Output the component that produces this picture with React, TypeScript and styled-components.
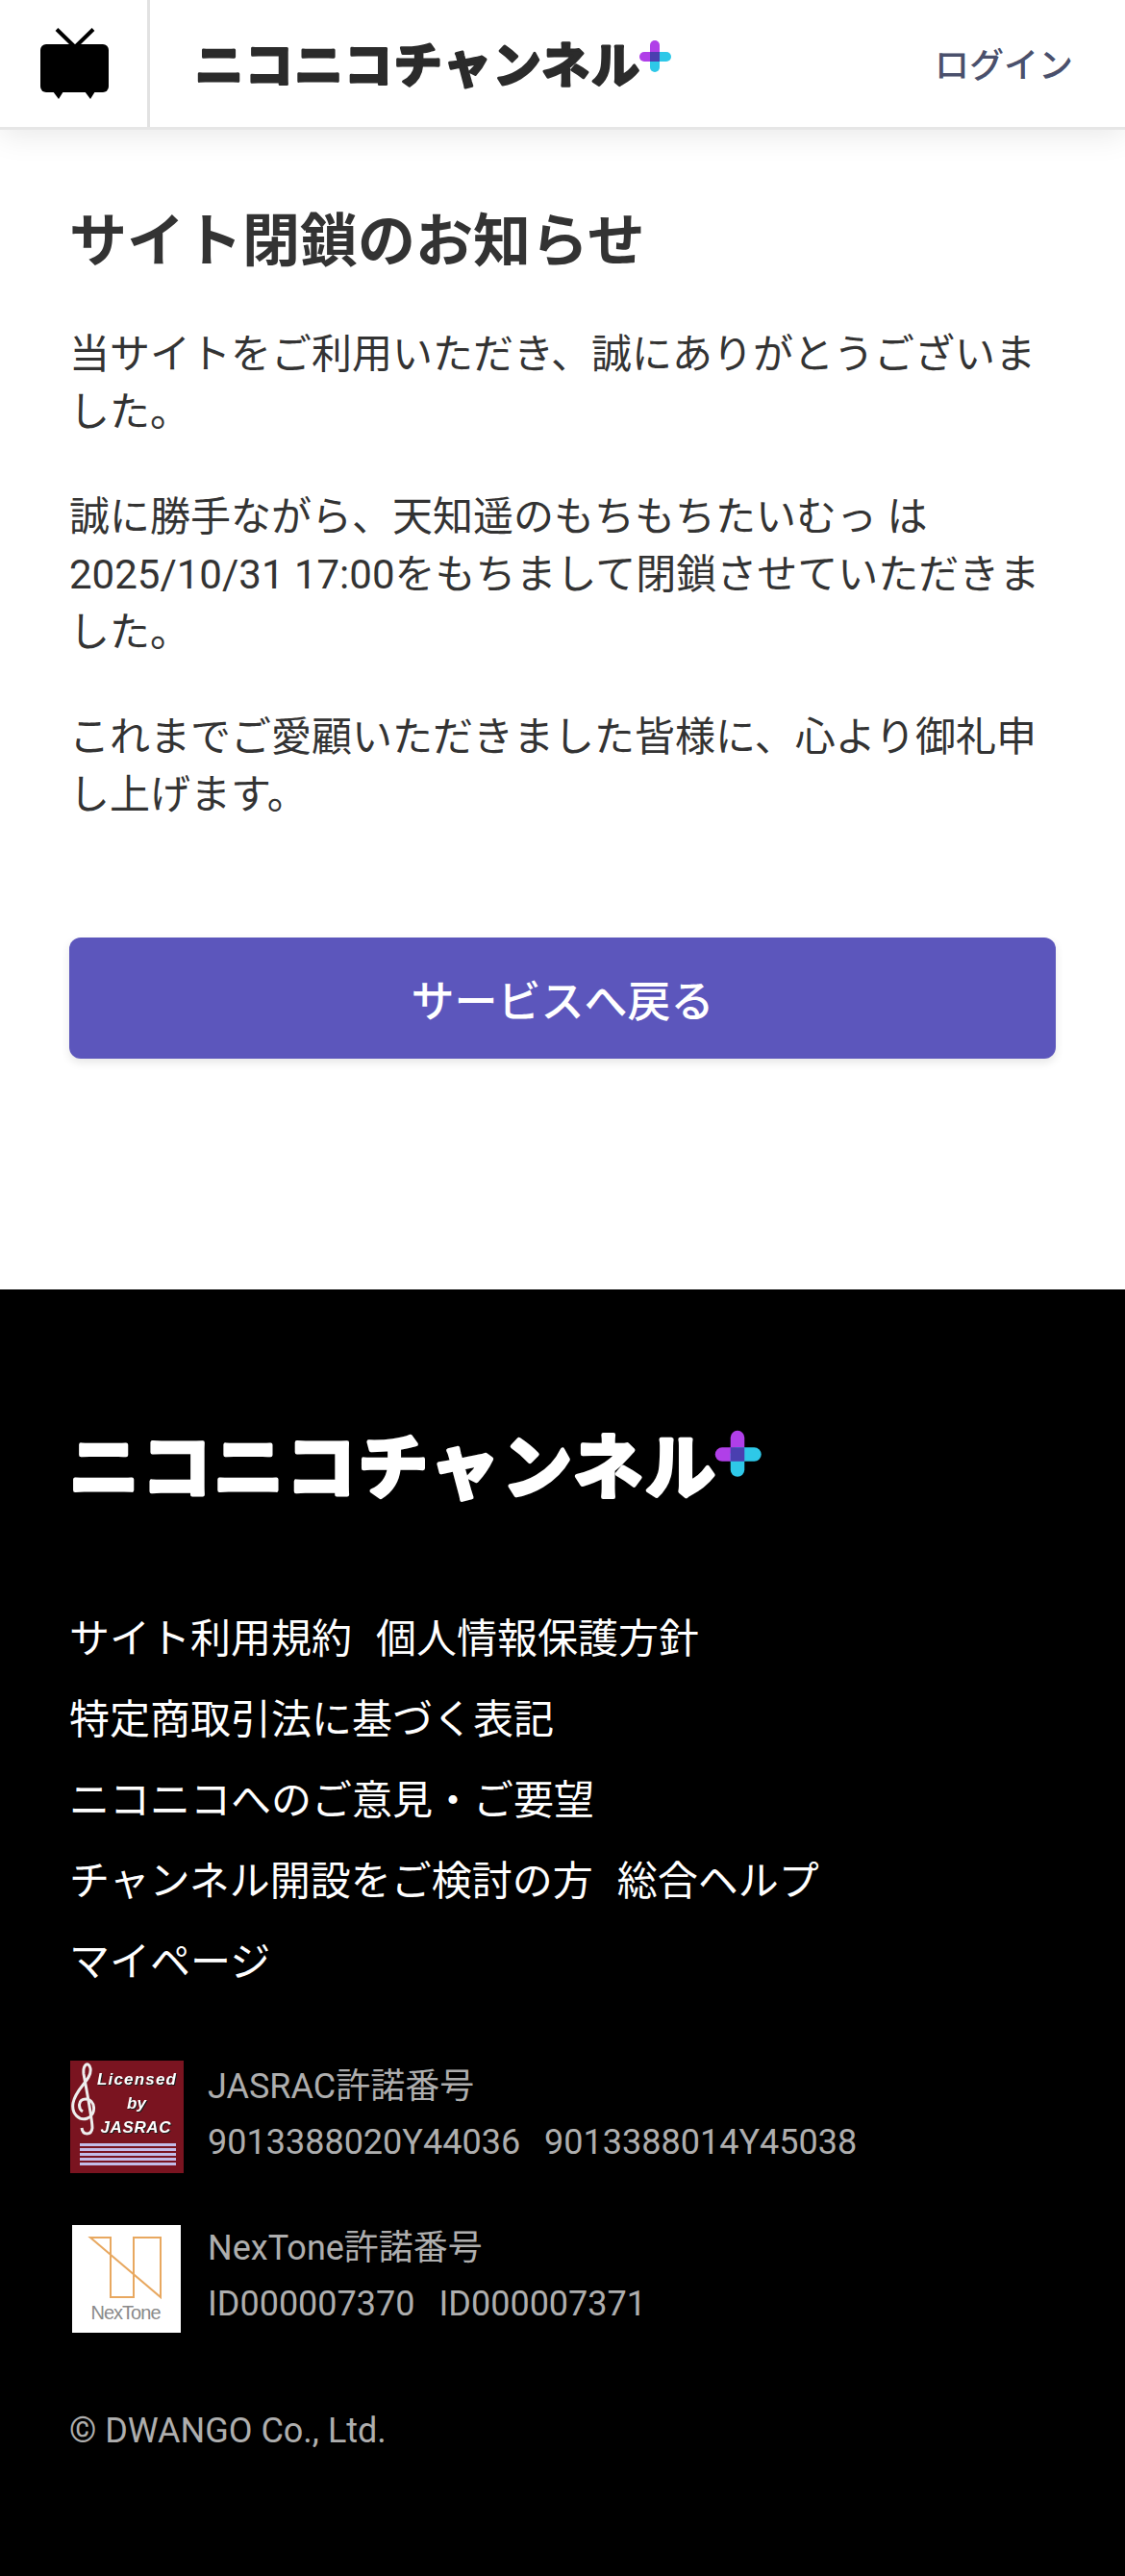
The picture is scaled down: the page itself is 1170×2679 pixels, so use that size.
import React from "react";
import styled, { createGlobalStyle } from "styled-components";

const GlobalStyle = createGlobalStyle`
  html, body {
    margin: 0;
    padding: 0;
    background: #fff;
  }
  body {
    font-family: Roboto, "Noto Sans CJK JP", sans-serif;
    color: #333;
  }
  * {
    box-sizing: border-box;
  }
`;

const Page = styled.div`
  width: 1170px;
  min-height: 2679px;
  display: flex;
  flex-direction: column;
`;

const Header = styled.header`
  position: relative;
  z-index: 1;
  height: 135px;
  display: flex;
  align-items: stretch;
  background: #fff;
  border-bottom: 3px solid #e6e6e6;
  box-shadow: 0 6px 30px rgba(0, 0, 0, 0.09);
`;

const IconCell = styled.div`
  width: 156px;
  display: flex;
  align-items: center;
  justify-content: flex-start;
  padding-left: 42px;
  border-right: 3px solid #e2e2e2;
`;

const HeaderLogo = styled.a`
  flex: 1;
  display: flex;
  align-items: center;
  padding-left: 47px;
`;

const LoginLink = styled.a`
  display: flex;
  align-items: center;
  padding-right: 54px;
  padding-bottom: 2px;
  font-size: 36px;
  font-weight: 500;
  color: #4a506c;
`;

const Main = styled.main`
  height: 1206px;
  padding: 0 72px;
  background: #fff;
`;

const Title = styled.h1`
  margin: 0;
  padding-top: 81px;
  font-size: 60px;
  line-height: 72px;
  font-weight: 700;
  color: #333;
`;

const Notice = styled.p`
  margin: 0;
  padding-top: 49px;
  font-size: 42px;
  line-height: 60px;
  color: #333;

  &:first-of-type {
    padding-top: 51px;
  }
`;

const BackButton = styled.a`
  height: 126px;
  margin-top: 118px;
  display: flex;
  align-items: center;
  justify-content: center;
  border-radius: 12px;
  background: #5c56bc;
  box-shadow: 0 4px 10px rgba(0, 0, 0, 0.1);
  color: #fff;
  font-size: 45px;
  font-weight: 500;
`;

const Footer = styled.footer`
  flex: 1;
  padding: 125px 72px 0;
  background: #000;
  color: #fff;
`;

const LinkList = styled.ul`
  list-style: none;
  max-width: 1000px;
  margin: 96px 0 0;
  padding: 0;
  display: flex;
  flex-wrap: wrap;
  column-gap: 25px;
  row-gap: 24px;
`;

const FooterLink = styled.li`
  font-size: 42px;
  line-height: 60px;
  color: #fff;
`;

const Licenses = styled.div`
  margin-top: 72px;
  display: flex;
  flex-direction: column;
  gap: 54px;
`;

const LicenseRow = styled.div`
  display: flex;
  align-items: center;
  gap: 25px;
`;

const Thumb = styled.div`
  width: 119px;
  display: flex;
  justify-content: center;
`;

const LicenseText = styled.div`
  margin-top: -6px;
  font-size: 36px;
  line-height: 58px;
  color: #aeaeae;
`;

const Numbers = styled.div`
  display: flex;
  gap: 25px;
`;

const Copyright = styled.div`
  margin-top: 72px;
  font-size: 36px;
  line-height: 60px;
  color: #aeaeae;
`;

const BadgeLettering = styled.g`
  font-family: "Liberation Sans", sans-serif;
  font-style: italic;
  font-weight: 700;
  font-size: 17px;
  fill: #fff;
  text-anchor: middle;
  filter: drop-shadow(1px 1px 0 #1c1c1c);
`;

const TvIcon = () => (
  <svg width="72" height="75" viewBox="0 0 72 75" style={{ display: "block" }}>
    <path d="M17 1.5 L36 20 M55 1.5 L36 20" stroke="#000" strokeWidth="4" fill="none" />
    <rect x="0" y="17" width="71" height="50" rx="6" fill="#000" />
    <path d="M13 66 L19 74 L24 66 Z M46 66 L52 74 L57 66 Z" fill="#000" />
  </svg>
);

const Logo = ({ color, scale }: { color: string; scale: number }) => (
  <svg
    width={496 * scale}
    height={78 * scale}
    viewBox="0 -14 496 78"
    style={{ display: "block" }}
  >
    <text
      x="0"
      y="45"
      fontFamily='"Noto Sans CJK JP", sans-serif'
      fontWeight="700"
      fontSize="50"
      textLength="462"
      lengthAdjust="spacing"
      fill={color}
      stroke={color}
      strokeWidth="3"
      strokeLinejoin="round"
    >
      ニコニコチャンネル
    </text>
    <rect x="473" y="1" width="10" height="22" rx="5" fill="#b03fe8" />
    <rect x="462" y="13" width="21" height="10" rx="5" fill="#b03fe8" />
    <rect x="473" y="13" width="10" height="21" rx="5" fill="#2ec8e8" />
    <rect x="473" y="13" width="22" height="10" rx="5" fill="#2ec8e8" />
    <rect x="473" y="13" width="10" height="10" fill="#4a3fb0" />
  </svg>
);

const JasracBadge = () => (
  <svg width="118" height="117" viewBox="0 0 118 117" style={{ display: "block" }}>
    <rect width="118" height="117" fill="#7a1420" />
    <path
      d="M12 70 C13 78 22 78 23 70 C23 62 17 30 14 14 C13 4 19 0 21 8 C23 20 6 28 3 44 C1 56 10 63 18 60 C28 56 26 40 16 40 C8 40 8 50 13 53"
      fill="none"
      stroke="#eeeeee"
      strokeWidth="3"
    />
    <BadgeLettering>
      <text x="69" y="25" textLength="82">Licensed</text>
      <text x="69" y="50">by</text>
      <text x="68" y="75" textLength="73">JASRAC</text>
    </BadgeLettering>
    <g fill="#c3bce8">
      <rect x="10" y="86" width="100" height="3" />
      <rect x="10" y="91" width="100" height="3" />
      <rect x="10" y="96" width="100" height="3" />
      <rect x="10" y="101" width="100" height="3" />
      <rect x="10" y="106" width="100" height="3" />
    </g>
  </svg>
);

const NexToneBadge = () => (
  <svg width="113" height="112" viewBox="0 0 113 112" style={{ display: "block" }}>
    <rect width="113" height="112" fill="#fff" />
    <path
      d="M19 13 H40 V75 H64 V13 H92 V75 Z"
      fill="none"
      stroke="#e8a860"
      strokeWidth="2"
    />
    <text
      x="56"
      y="98"
      textAnchor="middle"
      fontFamily='"Liberation Sans", sans-serif'
      fontSize="20"
      textLength="73"
      fill="#8a8a8a"
    >
      NexTone
    </text>
  </svg>
);

const links = [
  "サイト利用規約",
  "個人情報保護方針",
  "特定商取引法に基づく表記",
  "ニコニコへのご意見・ご要望",
  "チャンネル開設をご検討の方",
  "総合ヘルプ",
  "マイページ",
];

const App = () => {
  return (
    <Page>
      <GlobalStyle />
      <Header>
        <IconCell>
          <TvIcon />
        </IconCell>
        <HeaderLogo>
          <Logo color="#2b2b2b" scale={1} />
        </HeaderLogo>
        <LoginLink>ログイン</LoginLink>
      </Header>
      <Main>
        <Title>サイト閉鎖のお知らせ</Title>
        <Notice>当サイトをご利用いただき、誠にありがとうございました。</Notice>
        <Notice>
          誠に勝手ながら、天知遥のもちもちたいむっ は 2025/10/31
          17:00をもちまして閉鎖させていただきました。
        </Notice>
        <Notice>これまでご愛顧いただきました皆様に、心より御礼申し上げます。</Notice>
        <BackButton>サービスへ戻る</BackButton>
      </Main>
      <Footer>
        <Logo color="#fff" scale={1.454} />
        <LinkList>
          {links.map((label) => (
            <FooterLink key={label}>{label}</FooterLink>
          ))}
        </LinkList>
        <Licenses>
          <LicenseRow>
            <Thumb>
              <JasracBadge />
            </Thumb>
            <LicenseText>
              JASRAC許諾番号
              <Numbers>
                <span>9013388020Y44036</span>
                <span>9013388014Y45038</span>
              </Numbers>
            </LicenseText>
          </LicenseRow>
          <LicenseRow>
            <Thumb>
              <NexToneBadge />
            </Thumb>
            <LicenseText>
              NexTone許諾番号
              <Numbers>
                <span>ID000007370</span>
                <span>ID000007371</span>
              </Numbers>
            </LicenseText>
          </LicenseRow>
        </Licenses>
        <Copyright>© DWANGO Co., Ltd.</Copyright>
      </Footer>
    </Page>
  );
};

export default App;
